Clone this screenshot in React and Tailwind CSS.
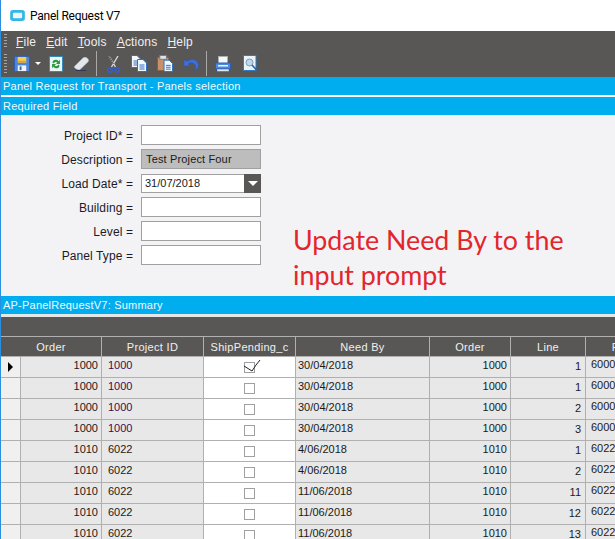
import React from 'react';

const font = { arial: 'font-["Liberation_Sans",Arial,sans-serif]' };

const columns = [
  { label: 'Order', width: 'w-[101px]' },
  { label: 'Project ID', width: 'w-[102px]' },
  { label: 'ShipPending_c', width: 'w-[92px]' },
  { label: 'Need By', width: 'w-[134px]' },
  { label: 'Order', width: 'w-[81px]' },
  { label: 'Line', width: 'w-[75px]' },
  { label: 'P', width: 'w-[60px]' },
];

const rows = [
  ['1000', '1000', '30/04/2018', '1000', '1', '6000'],
  ['1000', '1000', '30/04/2018', '1000', '1', '6000'],
  ['1000', '1000', '30/04/2018', '1000', '2', '6000'],
  ['1000', '1000', '30/04/2018', '1000', '3', '6000'],
  ['1010', '6022', '4/06/2018', '1010', '1', '6022'],
  ['1010', '6022', '4/06/2018', '1010', '2', '6022'],
  ['1010', '6022', '11/06/2018', '1010', '11', '6022'],
  ['1010', '6022', '11/06/2018', '1010', '12', '6022'],
  ['1010', '6022', '11/06/2018', '1010', '13', '6022'],
];

const fields = [
  { label: 'Project ID* =' },
  { label: 'Description =', value: 'Test Project Four', disabled: true },
  { label: 'Load Date* =', value: '31/07/2018', combo: true },
  { label: 'Building =' },
  { label: 'Level =' },
  { label: 'Panel Type =' },
];

function AppIcon() {
  return (
    <svg width="15" height="11" viewBox="0 0 16 12">
      <rect x="0" y="0" width="16" height="12" rx="3" fill="#35b6e6" />
      <rect x="3" y="3" width="10" height="6" rx="1" fill="#e8f7fc" />
    </svg>
  );
}

function Save() {
  return (
    <svg width="16" height="16" viewBox="0 0 17 17">
      <rect x="0.5" y="0.5" width="16" height="16" rx="1" fill="#4d84dc" stroke="#2b5fb5" />
      <rect x="4" y="1" width="9" height="6" fill="#f5cf52" />
      <rect x="4" y="5" width="9" height="2" fill="#e0a52c" />
      <rect x="4" y="10" width="9" height="6" fill="#f2f4f8" />
      <rect x="6" y="11" width="2" height="4" fill="#3b67a8" />
    </svg>
  );
}

function Refresh() {
  return (
    <svg width="14" height="16" viewBox="0 0 16 17" preserveAspectRatio="none">
      <rect x="0.5" y="0.5" width="15" height="16" fill="#e9f4fb" stroke="#2c87b8" />
      <path d="M4 7 C4 3.5 9 3 11 5.5 L12.5 4 V8.5 H8 L9.5 7 C8.5 5.8 6 6 5.5 8 Z" fill="#2f9b3c" />
      <path d="M12 10 C12 13.5 7 14 5 11.5 L3.5 13 V8.5 H8 L6.5 10 C7.5 11.2 10 11 10.5 9 Z" fill="#2f9b3c" />
    </svg>
  );
}

function Eraser() {
  return (
    <svg width="15" height="14" viewBox="0 0 16 14" preserveAspectRatio="none">
      <path d="M0.5 9.5 L9.5 1 C10.5 0.2 12 0 13.5 0.8 L15 2 C15.8 3 15.6 4 15 4.8 L7 12 C6 13 4.5 13 3.5 12.5 L1 11 C0.3 10.6 0.2 10 0.5 9.5 Z" fill="#e4e6ea" stroke="#b7bcc6" strokeWidth="0.6" />
      <path d="M2 13.5 H13" stroke="#33335a" strokeWidth="1" />
    </svg>
  );
}

function Scissors() {
  return (
    <svg width="13" height="17" viewBox="0 0 13 17">
      <path d="M2 0 L8.5 11 M11 0 L4.5 11" stroke="#d4d6da" strokeWidth="1.4" />
      <path d="M2 0 L6.5 8" stroke="#23252a" strokeWidth="0.7" />
      <circle cx="3" cy="14" r="2.2" fill="none" stroke="#2f5fd0" strokeWidth="1.5" />
      <circle cx="10" cy="14" r="2.2" fill="none" stroke="#2f5fd0" strokeWidth="1.5" />
    </svg>
  );
}

function Sheet({ x, y }) {
  return (
    <g transform={`translate(${x} ${y})`}>
      <path d="M0.5 0.5 H6 L9.5 4 V12.5 H0.5 Z" fill="#f3f8fd" stroke="#2f6fc4" />
      <path d="M2.5 6 H7.5 M2.5 8 H7.5 M2.5 10 H7.5" stroke="#2f6fc4" />
    </g>
  );
}

function Copy() {
  return (
    <svg width="16" height="17" viewBox="0 0 16 17">
      <Sheet x={0} y={0} />
      <Sheet x={6} y={4} />
    </svg>
  );
}

function Paste() {
  return (
    <svg width="16" height="17" viewBox="0 0 17 18">
      <rect x="0.5" y="2.5" width="12" height="14" fill="#c98f68" stroke="#8c5c3c" />
      <rect x="3" y="0.5" width="7" height="4" fill="#e2e2e2" stroke="#7a7a7a" />
      <Sheet x={7} y={5} />
    </svg>
  );
}

function Undo() {
  return (
    <svg width="15" height="13" viewBox="0 0 15 13">
      <path d="M0 2 V8 H6 L4 6 C6.5 3.8 10.5 4.5 11.5 8 C12 10 11 11.5 10 12.5 C13 11.8 15 9.5 14.5 6.5 C13.8 2 8 -0.5 3 3.5 L1.5 2 Z" fill="#3f6fd8" stroke="#2a50b0" strokeWidth="0.5" />
    </svg>
  );
}

function Printer() {
  return (
    <svg width="16" height="16" viewBox="0 0 16 16">
      <rect x="3.5" y="0.5" width="9" height="7" fill="#f7f8fa" stroke="#a9adb5" />
      <rect x="0.5" y="7" width="15" height="6" rx="1" fill="#4a8be0" stroke="#2b5fb5" />
      <rect x="3" y="9" width="10" height="1.5" fill="#eef3fa" />
      <rect x="2" y="13" width="12" height="2.5" fill="#dfe6f0" stroke="#2b5fb5" strokeWidth="0.5" />
    </svg>
  );
}

function Preview() {
  return (
    <svg width="15" height="17" viewBox="0 0 15 17">
      <rect x="0.5" y="0.5" width="12.5" height="15" fill="#eaf3fb" stroke="#2f7cc0" />
      <circle cx="6.5" cy="7.5" r="3.5" fill="#bcd9ee" stroke="#7d9cb5" />
      <path d="M9 10 L14 15.5" stroke="#2d5fa8" strokeWidth="1.6" />
    </svg>
  );
}

function Grip() {
  return <div className="w-[3px] h-[20px] bg-[repeating-linear-gradient(to_bottom,#a6a6a4_0,#a6a6a4_1px,transparent_1px,transparent_3px)]" />;
}

function Divider() {
  return <div className="w-px h-[25px] bg-[#a8a8a6]" />;
}

function BlueBar({ children }) {
  return (
    <div className="h-[18px] bg-[#00adef] text-[#f2fbff] text-[11px] leading-[18px] pl-[2px] tracking-[0.22px]">
      {children}
    </div>
  );
}

function Field({ label, value, disabled, combo }) {
  return (
    <div className="flex items-center h-[24px]">
      <div className="w-[132px] pt-[1px] text-right text-[12px] tracking-[0.1px] text-[#1a1a2a]">{label}</div>
      <div
        className={`ml-[8px] w-[120px] border border-[#a0a0a0] flex items-center text-[11px] ${
          disabled ? 'bg-[#bdbdbd] pl-[4px]' : 'bg-white pl-[3px]'
        } ${combo ? 'h-[19px]' : 'h-[20px]'}`}
      >
        <span className={`flex-1 text-[#1a1a1a] ${disabled ? 'tracking-[0.15px]' : ''}`}>{value}</span>
        {combo && (
          <div className="w-[17px] h-[19px] -mr-px shrink-0 bg-[#595755] flex items-center justify-center">
            <div className="w-0 h-0 border-x-[5px] border-x-transparent border-t-[5px] border-t-white" />
          </div>
        )}
      </div>
    </div>
  );
}

function Check({ checked }) {
  return (
    <div className="relative w-[11px] h-[11px] border border-[#a0a0a0] bg-white">
      {checked && (
        <svg className="absolute -top-[3px] -left-[1px]" width="17" height="12" viewBox="0 0 17 12">
          <path d="M0 6 L8 11 L12 5 L16 0" fill="none" stroke="#222" strokeWidth="1" />
        </svg>
      )}
    </div>
  );
}

function Cell({ width, className = '', children }) {
  return (
    <div className={`${width} shrink-0 h-full border-r border-[#b0b0b0] flex ${className}`}>
      {children}
    </div>
  );
}

function GridRow({ row, first }) {
  const [order, project, needBy, order2, line, part] = row;
  return (
    <div className="flex h-[21px] border-b border-[#b0b0b0] text-[11px] text-[#1a1a1a]">
      <div className="w-[20px] shrink-0 h-full bg-[#f0f0f0] border-r border-[#b0b0b0] flex items-center justify-center">
        {first && <div className="w-0 h-0 border-y-[5px] border-y-transparent border-l-[5px] border-l-black" />}
      </div>
      <Cell width="w-[81px]" className="bg-[#e8e8e8] justify-end pr-[3px]">{order}</Cell>
      <Cell width="w-[102px]" className="bg-[#e8e8e8] pl-[6px]">
        <span className={project === '1000' ? 'text-[#3d0a52]' : ''}>{project}</span>
      </Cell>
      <Cell width="w-[92px]" className="bg-white items-center justify-center pt-[1px]">
        <Check checked={first} />
      </Cell>
      <Cell width="w-[134px]" className="bg-[#e8e8e8] pl-[2px]">{needBy}</Cell>
      <Cell width="w-[81px]" className="bg-[#e8e8e8] justify-end pr-[3px]">{order2}</Cell>
      <Cell width="w-[75px]" className="bg-[#e8e8e8] justify-end pr-[4px] pt-[1px]">{line}</Cell>
      <div className="flex-1 h-full bg-[#e8e8e8] pl-[5px] leading-[14px]">{part}</div>
    </div>
  );
}

export default function App() {
  return (
    <div className={`w-[615px] h-[539px] overflow-hidden bg-white border-l border-[#2b8fe0] ${font.arial}`}>
      {/* Title bar */}
      <div className="h-[31px] flex items-center pl-[9px] gap-[5px] bg-white">
        <AppIcon />
        <span className="text-[12px] tracking-[-0.25px] text-black font-['Roboto',sans-serif]">Panel Request V7</span>
      </div>

      {/* Menu + toolbar */}
      <div className="h-[46px] bg-[#595755] text-[#f0f0f0]">
        <div className="h-[19px] flex items-center pl-[3px]">
          <div className="w-[3px] h-[13px] bg-[repeating-linear-gradient(to_bottom,#a6a6a4_0,#a6a6a4_1px,transparent_1px,transparent_3px)]" />
          <div className="flex gap-[10px] pl-[9px] pt-[3px] text-[12px] tracking-[0.2px]">
            <span><u>F</u>ile</span>
            <span><u>E</u>dit</span>
            <span><u>T</u>ools</span>
            <span><u>A</u>ctions</span>
            <span><u>H</u>elp</span>
          </div>
        </div>
        <div className="h-[27px] flex items-center pl-[3px]">
          <Grip />
          <div className="ml-[7px] pt-[1px]"><Save /></div>
          <div className="ml-[5px] w-0 h-0 border-x-[3px] border-x-transparent border-t-[3px] border-t-white" />
          <div className="ml-[8px] pt-[1px]"><Refresh /></div>
          <div className="ml-[11px] pt-[1px]"><Eraser /></div>
          <div className="ml-[7px]"><Divider /></div>
          <div className="ml-[10px] pt-[1px]"><Scissors /></div>
          <div className="ml-[11px]"><Copy /></div>
          <div className="ml-[10px]"><Paste /></div>
          <div className="ml-[11px] pt-[1px]"><Undo /></div>
          <div className="ml-[7px]"><Divider /></div>
          <div className="ml-[8px] pt-[1px]"><Printer /></div>
          <div className="ml-[12px]"><Preview /></div>
        </div>
      </div>

      <BlueBar>Panel Request for Transport - Panels selection</BlueBar>
      <div className="h-[2px] bg-white" />
      <BlueBar>Required Field</BlueBar>

      {/* Form */}
      <div className="relative h-[181px] bg-[#f3f3f5] pt-[8px]">
        <div className="flex flex-col">
          {fields.map((f) => (
            <Field key={f.label} {...f} />
          ))}
        </div>
        <div className="absolute left-[292px] top-[108px] text-[26.8px] leading-[35px] whitespace-nowrap text-[#e2262c] font-['Lato',sans-serif]">
          <div>Update Need By to the</div>
          <div>input prompt</div>
        </div>
      </div>

      <BlueBar>AP-PanelRequestV7: Summary</BlueBar>
      <div className="h-[3px] bg-[#e6e6e6]" />

      {/* Grid */}
      <div className="bg-[#595755] h-[19px] border-b border-[#b0b0b0] box-content" />
      <div className="flex h-[19px] bg-[#595755] text-[#f0f0f0] text-[11px]">
        {columns.map((c, i) => (
          <div
            key={i}
            className={`${c.width} shrink-0 border-r border-[#b0b0b0] flex items-center justify-center pt-[1px] tracking-[0.3px]`}
          >
            {c.label}
          </div>
        ))}
      </div>
      <div className="h-px bg-[#b0b0b0]" />
      {rows.map((r, i) => (
        <GridRow key={i} row={r} first={i === 0} />
      ))}
    </div>
  );
}
